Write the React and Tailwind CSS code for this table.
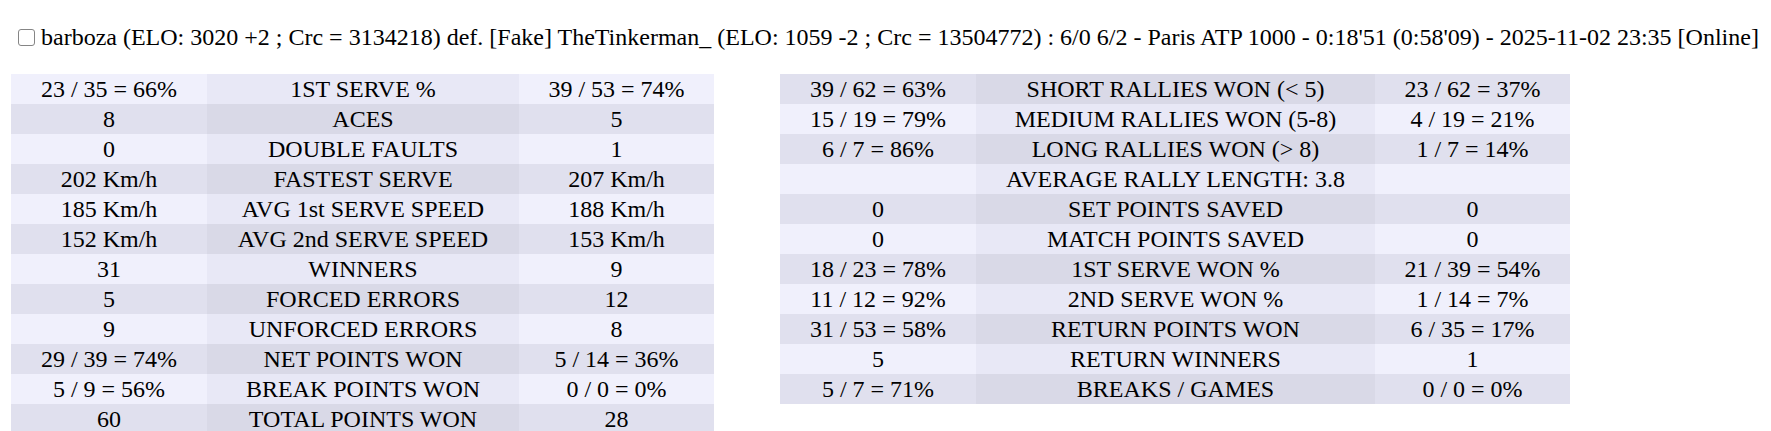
import React from "react";

const leftRows = [
  ["23 / 35 = 66%", "1ST SERVE %", "39 / 53 = 74%"],
  ["8", "ACES", "5"],
  ["0", "DOUBLE FAULTS", "1"],
  ["202 Km/h", "FASTEST SERVE", "207 Km/h"],
  ["185 Km/h", "AVG 1st SERVE SPEED", "188 Km/h"],
  ["152 Km/h", "AVG 2nd SERVE SPEED", "153 Km/h"],
  ["31", "WINNERS", "9"],
  ["5", "FORCED ERRORS", "12"],
  ["9", "UNFORCED ERRORS", "8"],
  ["29 / 39 = 74%", "NET POINTS WON", "5 / 14 = 36%"],
  ["5 / 9 = 56%", "BREAK POINTS WON", "0 / 0 = 0%"],
  ["60", "TOTAL POINTS WON", "28"],
];

const rightRows = [
  ["39 / 62 = 63%", "SHORT RALLIES WON (< 5)", "23 / 62 = 37%"],
  ["15 / 19 = 79%", "MEDIUM RALLIES WON (5-8)", "4 / 19 = 21%"],
  ["6 / 7 = 86%", "LONG RALLIES WON (> 8)", "1 / 7 = 14%"],
  ["", "AVERAGE RALLY LENGTH: 3.8", ""],
  ["0", "SET POINTS SAVED", "0"],
  ["0", "MATCH POINTS SAVED", "0"],
  ["18 / 23 = 78%", "1ST SERVE WON %", "21 / 39 = 54%"],
  ["11 / 12 = 92%", "2ND SERVE WON %", "1 / 14 = 7%"],
  ["31 / 53 = 58%", "RETURN POINTS WON", "6 / 35 = 17%"],
  ["5", "RETURN WINNERS", "1"],
  ["5 / 7 = 71%", "BREAKS / GAMES", "0 / 0 = 0%"],
];

function StatTable({ rows, midWidth, lightFirst }) {
  return (
    <table className="border-collapse">
      <tbody>
        {rows.map((r, i) => {
          const light = lightFirst ? i % 2 === 0 : i % 2 === 1;
          const side = light ? "bg-[#f0f0fc]" : "bg-[#e0e0ee]";
          const mid = light ? "bg-[#e8e8f6]" : "bg-[#d9d9e7]";
          return (
            <tr key={i} className="h-[30px]">
              <td className={`${side} w-[196px] p-0 text-center leading-[30px]`}>{r[0]}</td>
              <td className={`${mid} p-0 text-center leading-[30px]`} style={{ width: midWidth }}>
                {r[1]}
              </td>
              <td className={`${side} w-[195px] p-0 text-center leading-[30px]`}>{r[2]}</td>
            </tr>
          );
        })}
      </tbody>
    </table>
  );
}

export default function App() {
  return (
    <div className="bg-white min-h-[431px] pl-[11px] pt-[23px] font-['Liberation_Serif',serif] text-[24px] text-black">
      <div className="flex items-center h-[28px] leading-[28px] whitespace-nowrap">
        <span className="inline-block w-[17px] h-[17px] ml-[7px] mr-[6px] rounded-[3px] border-[1.5px] border-[#858585] bg-white shrink-0"></span>
        <span>
          barboza (ELO: 3020 +2 ; Crc = 3134218) def. [Fake] TheTinkerman_ (ELO: 1059 -2 ; Crc = 13504772) : 6/0 6/2 - Paris ATP 1000 - 0:18'51 (0:58'09) - 2025-11-02 23:35 [Online]
        </span>
      </div>
      <div className="flex items-start gap-[66px] mt-[23px]">
        <StatTable rows={leftRows} midWidth={312} lightFirst={true} />
        <StatTable rows={rightRows} midWidth={399} lightFirst={false} />
      </div>
    </div>
  );
}
